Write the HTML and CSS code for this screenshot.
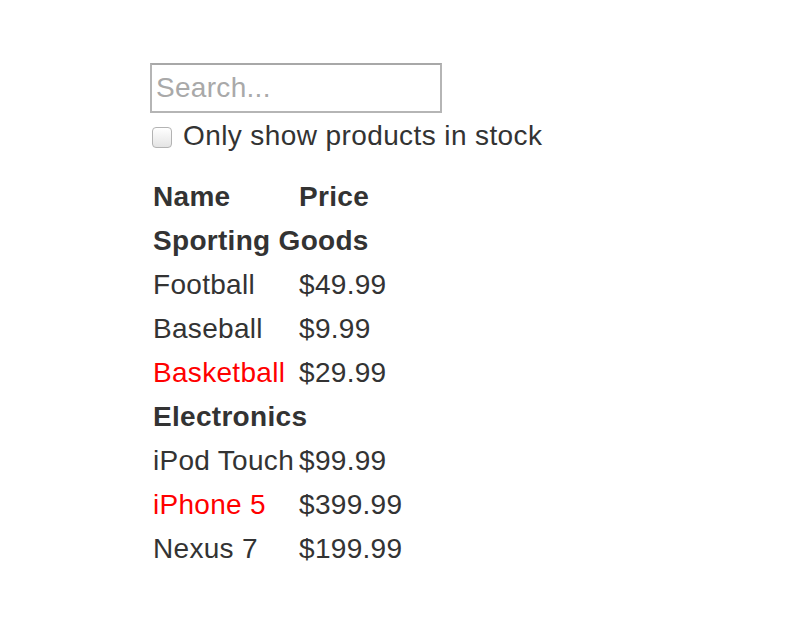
FILE: index.html
```html
<!DOCTYPE html>
<html>
<head>
<meta charset="utf-8">
<link rel="stylesheet" href="styles.css">
</head>
<body>
<div class="app">
  <form class="search-bar">
    <input class="search-input" type="text" placeholder="Search...">
    <label class="stock-row">
      <input class="stock-check" type="checkbox">
      <span>Only show products in stock</span>
    </label>
  </form>
  <table class="products">
    <thead>
      <tr><th>Name</th><th>Price</th></tr>
    </thead>
    <tbody>
      <tr><th colspan="2">Sporting Goods</th></tr>
      <tr><td>Football</td><td>$49.99</td></tr>
      <tr><td>Baseball</td><td>$9.99</td></tr>
      <tr><td class="out">Basketball</td><td>$29.99</td></tr>
      <tr><th colspan="2">Electronics</th></tr>
      <tr><td>iPod Touch</td><td>$99.99</td></tr>
      <tr><td class="out">iPhone 5</td><td>$399.99</td></tr>
      <tr><td>Nexus 7</td><td>$199.99</td></tr>
    </tbody>
  </table>
</div>
</body>
</html>
```
FILE: styles.css
```css
html, body {
  margin: 0;
  padding: 0;
  background: #fff;
}
body {
  font-family: "Liberation Sans", Arial, Helvetica, sans-serif;
  font-size: 28px;
  color: #333;
  letter-spacing: 0.3px;
}
.app {
  padding: 63px 0 0 150px;
}
.search-bar {
  margin: 0;
  display: flex;
  flex-direction: column;
  align-items: flex-start;
}
.search-input {
  box-sizing: border-box;
  width: 292px;
  height: 50px;
  margin: 0;
  padding: 0 4px;
  border: 2px solid #b5b5b5;
  border-top-color: #a8a8a8;
  font-family: inherit;
  font-size: 28px;
  letter-spacing: 0.3px;
  color: #333;
  outline: none;
  background: #fff;
}
.search-input::placeholder {
  color: #a9a9a9;
}
.stock-row {
  display: flex;
  align-items: center;
  gap: 11px;
  margin-top: 7px;
  line-height: 32px;
  padding-left: 2px;
}
.stock-row span {
  letter-spacing: 0.4px;
}
.stock-check {
  appearance: none;
  -webkit-appearance: none;
  box-sizing: border-box;
  width: 20px;
  height: 21px;
  margin: 2px 0 0 0;
  border: 1px solid #b3b3b3;
  border-radius: 4px;
  background: linear-gradient(#ffffff, #e4e4e4);
}
.products {
  border-collapse: separate;
  border-spacing: 0 4px;
  margin-top: 21px;
}
.products th,
.products td {
  text-align: left;
  padding: 0 2px 0 3px;
  line-height: 40px;
  white-space: nowrap;
}
.products th {
  font-weight: bold;
}
.products .out {
  color: #f00;
}
```
